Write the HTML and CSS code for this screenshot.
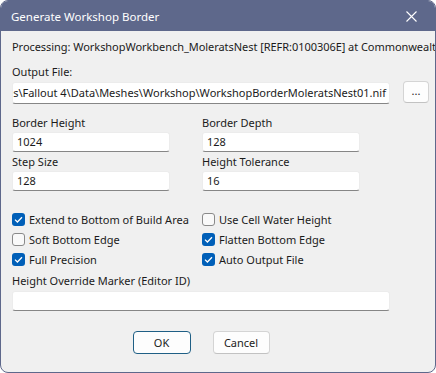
FILE: index.html
```html
<!DOCTYPE html>
<html lang="en">
<head>
  <meta charset="UTF-8">
  <title>Generate Workshop Border</title>
  <link rel="stylesheet" href="styles.css">
</head>
<body>
  <div class="window">
    <div class="titlebar">
      <span class="title">Generate Workshop Border</span>
      <svg class="close" width="11" height="11" viewBox="0 0 11 11">
        <path d="M0.5 0.5 L10.5 10.5 M10.5 0.5 L0.5 10.5" stroke="#fff" stroke-width="1.1" fill="none"/>
      </svg>
    </div>

    <div class="content">
      <div class="processing">Processing: WorkshopWorkbench_MoleratsNest [REFR:0100306E] at CommonwealthExterior (0,0)</div>

      <div class="label label-first">Output File:</div>
      <div class="file-row">
        <div class="textbox path-box"><span>C:\Games\Fallout 4\Data\Meshes\Workshop\WorkshopBorderMoleratsNest01.nif</span></div>
        <div class="button small-button">...</div>
      </div>

      <div class="fields">
        <div class="field">
          <div class="label">Border Height</div>
          <div class="textbox">1024</div>
        </div>
        <div class="field">
          <div class="label">Border Depth</div>
          <div class="textbox">128</div>
        </div>
        <div class="field">
          <div class="label">Step Size</div>
          <div class="textbox">128</div>
        </div>
        <div class="field">
          <div class="label">Height Tolerance</div>
          <div class="textbox">16</div>
        </div>
      </div>

      <div class="checks">
        <div class="check"><span class="box checked"><svg width="13" height="13" viewBox="0 0 13 13"><path d="M3 6.6 L5.4 9 L10 4.2" stroke="#fff" stroke-width="1.3" fill="none"/></svg></span>Extend to Bottom of Build Area</div>
        <div class="check"><span class="box"></span>Use Cell Water Height</div>
        <div class="check"><span class="box"></span>Soft Bottom Edge</div>
        <div class="check"><span class="box checked"><svg width="13" height="13" viewBox="0 0 13 13"><path d="M3 6.6 L5.4 9 L10 4.2" stroke="#fff" stroke-width="1.3" fill="none"/></svg></span>Flatten Bottom Edge</div>
        <div class="check"><span class="box checked"><svg width="13" height="13" viewBox="0 0 13 13"><path d="M3 6.6 L5.4 9 L10 4.2" stroke="#fff" stroke-width="1.3" fill="none"/></svg></span>Full Precision</div>
        <div class="check"><span class="box checked"><svg width="13" height="13" viewBox="0 0 13 13"><path d="M3 6.6 L5.4 9 L10 4.2" stroke="#fff" stroke-width="1.3" fill="none"/></svg></span>Auto Output File</div>
      </div>

      <div class="label label-marker">Height Override Marker (Editor ID)</div>
      <div class="textbox wide-box"></div>

      <div class="buttons">
        <div class="button default-button">OK</div>
        <div class="button">Cancel</div>
      </div>
    </div>
  </div>
</body>
</html>
```

FILE: styles.css
```css
html, body {
  margin: 0;
  padding: 0;
  background-color: #ffffff;
}
body {
  font-family: "Noto Sans", "Open Sans", sans-serif;
  font-size: 11px;
  color: #1b1b1b;
}
.window {
  width: 436px;
  height: 373px;
  box-sizing: border-box;
  border: 1px solid #5e688b;
  border-radius: 8px;
  background-color: #f0f0f0;
  overflow: hidden;
}
.titlebar {
  height: 30px;
  background-color: #5e688b;
  color: #ffffff;
  display: flex;
  align-items: center;
  justify-content: space-between;
  padding: 0 18px 0 10px;
}
.title {
  font-size: 11.5px;
}
.close {
  display: block;
}
.content {
  padding: 0 0 0 11px;
}
.processing {
  margin-top: 8px;
  line-height: 16px;
  white-space: nowrap;
  overflow: hidden;
  letter-spacing: -0.05px;
}
.label {
  line-height: 16px;
  white-space: nowrap;
}
.label-first {
  margin-top: 9px;
}
.textbox {
  box-sizing: border-box;
  height: 20px;
  margin-top: 1px;
  padding: 0 4px;
  line-height: 18px;
  background-color: #ffffff;
  border: 1px solid #ececec;
  border-bottom-color: #868686;
  border-radius: 3px;
  white-space: nowrap;
  overflow: hidden;
}
.file-row {
  display: flex;
  align-items: flex-start;
  gap: 13px;
  margin-top: 1px;
}
.path-box {
  width: 378px;
  height: 22px;
  line-height: 20px;
  display: flex;
  justify-content: flex-end;
  padding: 0 3px 0 0;
}
.button {
  box-sizing: border-box;
  width: 57px;
  height: 23px;
  line-height: 21px;
  text-align: center;
  background-color: #fdfdfd;
  border: 1px solid #d4d4d4;
  border-bottom-color: #c2c2c2;
  border-radius: 4px;
}
.small-button {
  width: 26px;
  height: 22px;
  line-height: 18px;
}
.fields {
  display: grid;
  grid-template-columns: 158px 158px;
  column-gap: 32px;
  row-gap: 2px;
  margin-top: 11px;
}
.checks {
  display: grid;
  grid-template-columns: 158px 200px;
  column-gap: 32px;
  margin-top: 18px;
}
.check {
  height: 20px;
  display: flex;
  align-items: center;
  white-space: nowrap;
}
.box {
  box-sizing: border-box;
  width: 13px;
  height: 13px;
  margin-right: 4px;
  border: 1px solid #8a8a8a;
  border-radius: 3px;
  background-color: #f9f9f9;
  display: flex;
}
.box.checked {
  border: none;
  background-color: #005fb8;
}
.label-marker {
  margin-top: 4px;
}
.wide-box {
  width: 378px;
  margin-top: 2px;
}
.buttons {
  width: 378px;
  display: flex;
  justify-content: center;
  gap: 22px;
  margin-top: 20px;
}
.default-button {
  width: 58px;
  border: 1px solid #1f5f85;
}
```
